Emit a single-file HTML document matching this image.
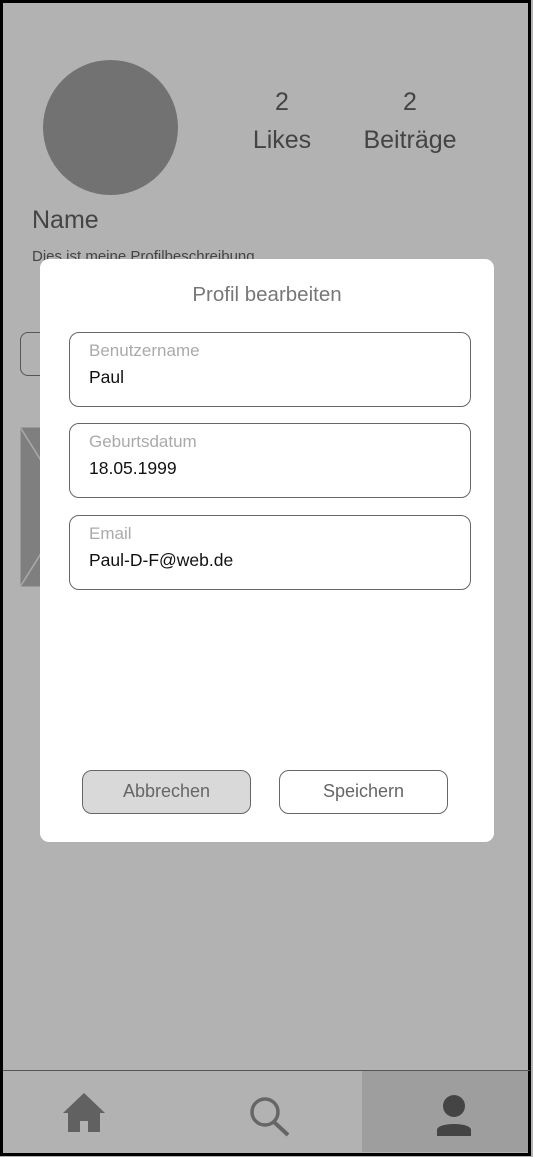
<!DOCTYPE html>
<html><head><meta charset="utf-8"><style>
*{margin:0;padding:0;box-sizing:border-box}
body{width:533px;height:1157px;background:#b3b3b3;position:relative;overflow:hidden;font-family:"Liberation Sans",sans-serif}
.frame{position:absolute;left:0;top:0;width:531px;height:1156px;border:3px solid #000;background:#b2b2b2}
.a{position:absolute}
.t{color:#444}
.field{position:absolute;left:69px;width:402px;height:75px;border:1.5px solid #666;border-radius:10px;background:#fff}
.field .l{position:absolute;left:19px;top:8px;font-size:17px;color:#aaa}
.field .v{position:absolute;left:19px;top:34px;font-size:17.5px;color:#111}
.btn{position:absolute;top:770px;width:169px;height:44px;border:1.5px solid #666;border-radius:10px;font-size:18px;color:#666;text-align:center;line-height:41px}
</style></head><body>
<div class="frame"></div>
<div class="a" style="left:43px;top:60px;width:135px;height:135px;border-radius:50%;background:#727272"></div>
<div class="a t" style="left:252px;top:88px;width:60px;text-align:center;font-size:25px">2</div>
<div class="a t" style="left:232px;top:126px;width:100px;text-align:center;font-size:25px">Likes</div>
<div class="a t" style="left:380px;top:88px;width:60px;text-align:center;font-size:25px">2</div>
<div class="a t" style="left:355px;top:126px;width:110px;text-align:center;font-size:25px">Beiträge</div>
<div class="a t" style="left:32px;top:206px;font-size:25px">Name</div>
<div class="a t" style="left:32px;top:248px;font-size:15px">Dies ist meine Profilbeschreibung</div>
<div class="a" style="left:20px;top:332px;width:100px;height:44px;border:1.5px solid #555;border-radius:8px"></div>
<svg class="a" style="left:20px;top:427px" width="100" height="160"><rect x="0.5" y="0.5" width="99" height="159" fill="#7f7f7f" stroke="#999"/><path d="M0 0 L100 160 M100 0 L0 160" stroke="#aaa" stroke-width="1.5"/></svg>
<div class="a" style="left:40px;top:259px;width:454px;height:583px;background:#fff;border-radius:9px"></div>
<div class="a" style="left:40px;top:283px;width:454px;text-align:center;font-size:20.5px;color:#777">Profil bearbeiten</div>
<div class="field" style="top:332px"><div class="l">Benutzername</div><div class="v">Paul</div></div>
<div class="field" style="top:423px"><div class="l">Geburtsdatum</div><div class="v">18.05.1999</div></div>
<div class="field" style="top:515px"><div class="l">Email</div><div class="v">Paul-D-F@web.de</div></div>
<div class="btn" style="left:82px;background:#d9d9d9">Abbrechen</div>
<div class="btn" style="left:279px;background:#fff">Speichern</div>
<div class="a" style="left:3px;top:1070px;width:527px;height:1px;background:#555"></div>
<div class="a" style="left:362px;top:1071px;width:166px;height:81px;background:#9e9e9e"></div>
<svg class="a" style="left:60px;top:1090px" width="48" height="44" viewBox="0 0 48 44"><path d="M24 3 L3 23 H8 V42 H20 V31 H28 V42 H40 V23 H45 Z" fill="#616161"/></svg>
<svg class="a" style="left:245px;top:1092px" width="48" height="46" viewBox="0 0 48 46"><circle cx="20" cy="20" r="13" fill="none" stroke="#666" stroke-width="3.5"/><path d="M29 30 L43 43" stroke="#666" stroke-width="4"/></svg>
<svg class="a" style="left:426px;top:1094px" width="56" height="44" viewBox="0 0 56 44"><circle cx="28" cy="12" r="11" fill="#444"/><path d="M11 42 V36 C11 28 45 28 45 36 V42 Z" fill="#444"/></svg>
</body></html>
